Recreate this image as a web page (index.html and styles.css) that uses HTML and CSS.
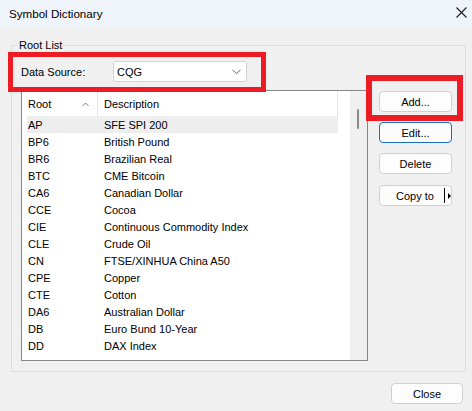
FILE: index.html
```html
<!DOCTYPE html>
<html>
<head>
<meta charset="utf-8">
<link rel="stylesheet" href="styles.css">
</head>
<body>
<div class="window">
  <div class="titlebar">
    <span class="title">Symbol Dictionary</span>
    <svg class="close-x" width="11" height="11" viewBox="0 0 11 11"><path d="M0.5 0.5 L10.5 10.5 M10.5 0.5 L0.5 10.5" stroke="#1b1b1b" stroke-width="1.1" fill="none"/></svg>
  </div>

  <div class="group">
    <span class="legend">Root List</span>
    <div class="source-row">
      <span class="source-label">Data Source:</span>
      <div class="combo">
        <span>CQG</span>
        <svg class="chev" width="9" height="6" viewBox="0 0 9 6"><path d="M0.5 0.8 L4.5 4.8 L8.5 0.8" stroke="#5f5f5f" stroke-width="1" fill="none"/></svg>
      </div>
    </div>

    <div class="main-row">
      <div class="list">
        <div class="list-body">
          <div class="header">
            <div class="hcol root-h">Root<svg class="sort" width="7" height="5" viewBox="0 0 7 5"><path d="M0.5 4 L3.5 1 L6.5 4" stroke="#7a7a7a" stroke-width="1" fill="none"/></svg></div>
            <div class="hcol desc-h">Description</div>
          </div>
          <div class="row sel"><span class="c1">AP</span><span class="c2">SFE SPI 200</span></div>
          <div class="row"><span class="c1">BP6</span><span class="c2">British Pound</span></div>
          <div class="row"><span class="c1">BR6</span><span class="c2">Brazilian Real</span></div>
          <div class="row"><span class="c1">BTC</span><span class="c2">CME Bitcoin</span></div>
          <div class="row"><span class="c1">CA6</span><span class="c2">Canadian Dollar</span></div>
          <div class="row"><span class="c1">CCE</span><span class="c2">Cocoa</span></div>
          <div class="row"><span class="c1">CIE</span><span class="c2">Continuous Commodity Index</span></div>
          <div class="row"><span class="c1">CLE</span><span class="c2">Crude Oil</span></div>
          <div class="row"><span class="c1">CN</span><span class="c2">FTSE/XINHUA China A50</span></div>
          <div class="row"><span class="c1">CPE</span><span class="c2">Copper</span></div>
          <div class="row"><span class="c1">CTE</span><span class="c2">Cotton</span></div>
          <div class="row"><span class="c1">DA6</span><span class="c2">Australian Dollar</span></div>
          <div class="row"><span class="c1">DB</span><span class="c2">Euro Bund 10-Year</span></div>
          <div class="row"><span class="c1">DD</span><span class="c2">DAX Index</span></div>
        </div>
        <div class="scrollbar"><div class="thumb"></div></div>
      </div>

      <div class="buttons">
        <button class="btn">Add...</button>
        <button class="btn focused">Edit...</button>
        <button class="btn">Delete</button>
        <button class="btn split"><span class="split-text">Copy to</span><span class="split-sep"></span><span class="split-arrow"></span></button>
      </div>
    </div>
  </div>

  <div class="footer">
    <button class="btn close-btn">Close</button>
  </div>

  <div class="mark mark-source"></div>
  <div class="mark mark-add"></div>
</div>
</body>
</html>
```

FILE: styles.css
```css
html, body {
  margin: 0;
  padding: 0;
}
body {
  background: #f0f0f0;
  font-family: "Liberation Sans", Arial, sans-serif;
  font-size: 11px;
  color: #000;
}
.window {
  position: relative;
  width: 472px;
  height: 411px;
  overflow: hidden;
  background: #f0f0f0;
}
.titlebar {
  height: 28px;
  background: #eff3fa;
  display: flex;
  align-items: center;
  justify-content: space-between;
  padding: 0 5px 1px 9px;
  box-sizing: border-box;
}
.title {
  font-size: 11.6px;
  color: #000;
}
.close-x {
  display: block;
  margin-bottom: 3px;
}
.group {
  position: relative;
  margin: 17px 0 0 11px;
  width: 455px;
  height: 327px;
  box-sizing: border-box;
  border: 1px solid #dcdcdc;
  padding: 15px 0 0 9px;
}
.legend {
  position: absolute;
  top: -7px;
  left: 6px;
  padding: 0 1px;
  line-height: 13px;
  background: #f0f0f0;
}
.source-row {
  display: flex;
  align-items: center;
  height: 21px;
}
.source-label {
  width: 92px;
}
.combo {
  width: 134px;
  height: 21px;
  box-sizing: border-box;
  border: 1px solid #d3d3d3;
  border-radius: 3px;
  background: #fff;
  display: flex;
  align-items: center;
  justify-content: space-between;
  padding: 0 5px 0 3px;
}
.chev {
  display: block;
}
.main-row {
  display: flex;
  align-items: flex-start;
  margin-top: 8px;
}
.list {
  width: 347px;
  height: 271px;
  box-sizing: border-box;
  border: 1px solid #878787;
  background: #fff;
  display: flex;
}
.list-body {
  width: 328px;
  height: 269px;
  overflow: hidden;
  padding-left: 5px;
  box-sizing: border-box;
}
.header {
  display: flex;
  height: 25px;
  width: 311px;
}
.hcol {
  display: flex;
  align-items: center;
  box-sizing: border-box;
}
.root-h {
  width: 70px;
  padding-left: 1px;
  position: relative;
}
.sort {
  position: absolute;
  left: 55px;
  top: 11px;
}
.desc-h {
  width: 241px;
  border-left: 1px solid #e5e5e5;
  border-right: 1px solid #e5e5e5;
  padding-left: 6px;
}
.row {
  display: flex;
  align-items: center;
  height: 17px;
  width: 311px;
}
.row.sel {
  background: #eeeeee;
}
.c1 {
  width: 70px;
  padding-left: 1px;
  box-sizing: border-box;
  white-space: nowrap;
}
.c2 {
  padding-left: 7px;
  white-space: nowrap;
}
.scrollbar {
  position: relative;
  width: 17px;
  height: 269px;
  background: #f0f0f0;
}
.thumb {
  margin: 18px 0 0 7px;
  width: 2px;
  height: 20px;
  border-radius: 1px;
  background: #8a8a8a;
}
.buttons {
  display: flex;
  flex-direction: column;
  gap: 10px;
  margin: 1px 0 0 11px;
}
.btn {
  width: 73px;
  height: 21px;
  box-sizing: border-box;
  border: 1px solid #d0d0d0;
  border-radius: 4px;
  background: #fdfdfd;
  font-family: "Liberation Sans", Arial, sans-serif;
  font-size: 11px;
  color: #000;
  padding: 0;
  display: flex;
  align-items: center;
  justify-content: center;
}
.btn.focused {
  border: 1px solid #1a6fc4;
}
.btn.split {
  margin-top: 1px;
  justify-content: flex-start;
  padding-left: 16px;
}
.split-sep {
  width: 1px;
  height: 15px;
  background: #000;
  margin-left: 10px;
}
.split-arrow {
  width: 0;
  height: 0;
  border-top: 3px solid transparent;
  border-bottom: 3px solid transparent;
  border-left: 3px solid #000;
  margin-left: 3px;
}
.footer {
  display: flex;
  justify-content: flex-end;
  padding: 11px 9px 0 0;
}
.close-btn {
  width: 72px;
  height: 21px;
}
.mark {
  position: absolute;
  box-sizing: border-box;
  border: 5px solid #ed1c24;
}
.mark-source {
  left: 8px;
  top: 52px;
  width: 258px;
  height: 40px;
}
.mark-add {
  left: 366px;
  top: 75px;
  width: 97px;
  height: 46px;
  border-width: 6px;
}
```
